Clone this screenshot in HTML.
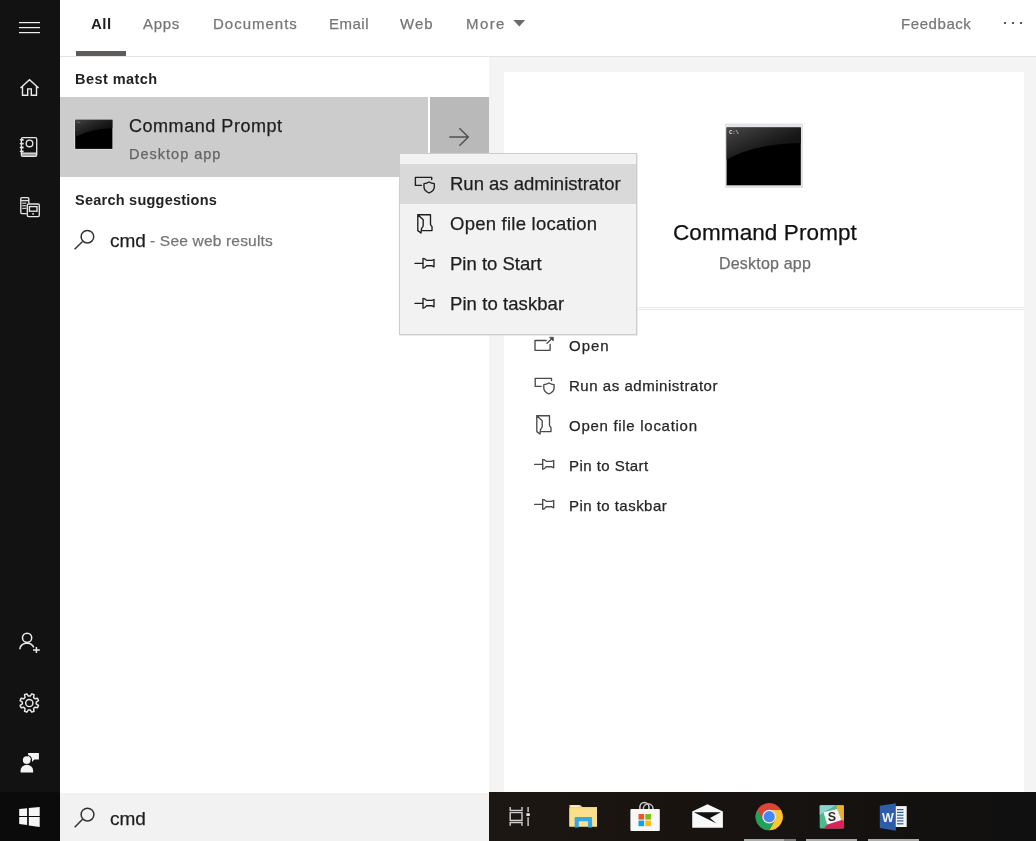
<!DOCTYPE html>
<html><head><meta charset="utf-8">
<style>
*{margin:0;padding:0;box-sizing:border-box}
html,body{width:1036px;height:841px;overflow:hidden;background:#fff;font-family:"Liberation Sans",sans-serif;position:relative}
.a{position:absolute}
.t{position:absolute;white-space:nowrap;line-height:1;will-change:transform;-webkit-text-stroke:0.25px currentColor}
#side{left:0;top:0;width:60px;height:792px;background:#121212}
#winbtn{left:0;top:792px;width:60px;height:49px;background:#0b0b0b}
#tabs{left:60px;top:0;width:976px;height:57px;background:#fff;border-bottom:1px solid #e3e3e3}
#left{left:60px;top:57px;width:429px;height:735px;background:#fff}
#right{left:489px;top:57px;width:547px;height:735px;background:#f4f4f4}
#card{left:504px;top:72px;width:520px;height:720px;background:#fff}
#search{left:60px;top:793px;width:429px;height:48px;background:#f2f2f2}
#taskbar{left:489px;top:792px;width:547px;height:49px;background:linear-gradient(90deg,#1d1713 0%,#18130f 40%,#101010 100%)}
#sel{left:60px;top:97px;width:368px;height:80px;background:#cccccc}
#arrow{left:430px;top:97px;width:59px;height:80px;background:#b9b9b9}
#menu{left:399px;top:153px;width:238px;height:182px;background:#f2f2f2;border:1px solid #cdcdcd;box-shadow:0.5px 0.5px 0 #d8d8d8}
#hl{left:400px;top:164px;width:236px;height:40px;background:#d9d9d9}
.tab{top:16px;font-size:15px;color:#767676}
.act{font-size:15px;color:#262626;letter-spacing:0.5px}
.mi{font-size:18.5px;color:#1e1e1e}
</style></head><body>
<div class="a" id="side"></div>
<div class="a" id="winbtn"></div>
<div class="a" id="tabs"></div>
<div class="a" id="left"></div>
<div class="a" id="right"></div>
<div class="a" id="card"></div>
<div class="a" id="search"></div>
<div class="a" id="taskbar"></div>
<div class="a" id="sel"></div>
<div class="a" id="arrow"></div>

<!-- tabs text -->
<div class="t tab" style="left:91px;font-weight:bold;-webkit-text-stroke:0;color:#1f1f1f;letter-spacing:0.5px">All</div>
<div class="t tab" style="left:143px;letter-spacing:0.67px">Apps</div>
<div class="t tab" style="left:213px;letter-spacing:1px">Documents</div>
<div class="t tab" style="left:329px;letter-spacing:0.5px">Email</div>
<div class="t tab" style="left:400px;letter-spacing:1px">Web</div>
<div class="t tab" style="left:466px;letter-spacing:1.4px">More</div>
<div class="t tab" style="left:901px;letter-spacing:0.57px">Feedback</div>
<div class="a" style="left:76px;top:51px;width:50px;height:5px;background:#5f5b58"></div>

<div class="t" style="left:75px;top:72px;font-size:14.5px;font-weight:bold;-webkit-text-stroke:0;color:#222;letter-spacing:0.44px">Best match</div>
<div class="t" style="left:129px;top:117px;font-size:18px;color:#1e1e1e;letter-spacing:0.54px">Command Prompt</div>
<div class="t" style="left:129px;top:147px;font-size:14.5px;color:#646464;letter-spacing:1px">Desktop app</div>
<div class="t" style="left:75px;top:193px;font-size:14.5px;font-weight:bold;-webkit-text-stroke:0;color:#222;letter-spacing:0.24px">Search suggestions</div>
<div class="t" style="left:110px;top:230.5px;font-size:19px;color:#1e1e1e;letter-spacing:0px">cmd</div>
<div class="t" style="left:150px;top:233px;font-size:15.5px;color:#767676;letter-spacing:0.19px">- See web results</div>

<div class="t" style="left:673px;top:222px;font-size:22.5px;color:#111;letter-spacing:0.1px">Command Prompt</div>
<div class="t" style="left:719px;top:256px;font-size:16px;color:#6e6e6e;letter-spacing:0.2px">Desktop app</div>
<div class="a" style="left:504px;top:307px;width:520px;height:1px;background:#ebebeb"></div><div class="a" style="left:504px;top:309px;width:520px;height:1px;background:#ebebeb"></div>

<div class="t act" style="left:569px;top:338px;letter-spacing:1px">Open</div>
<div class="t act" style="left:569px;top:378px;letter-spacing:0.53px">Run as administrator</div>
<div class="t act" style="left:569px;top:418px;letter-spacing:0.71px">Open file location</div>
<div class="t act" style="left:569px;top:458px;letter-spacing:0.45px">Pin to Start</div>
<div class="t act" style="left:569px;top:498px;letter-spacing:0.46px">Pin to taskbar</div>

<div class="t" style="left:110px;top:808.5px;font-size:19px;color:#1e1e1e;letter-spacing:0px">cmd</div>

<div class="a" id="menu"></div>
<div class="a" id="hl"></div>
<div class="t mi" style="left:450px;top:175px;letter-spacing:0px">Run as administrator</div>
<div class="t mi" style="left:450px;top:215px;letter-spacing:0.24px">Open file location</div>
<div class="t mi" style="left:450px;top:255px;letter-spacing:0px">Pin to Start</div>
<div class="t mi" style="left:450px;top:295px;letter-spacing:0.08px">Pin to taskbar</div>

<!-- ICONS overlay -->
<svg class="a" style="left:0;top:0" width="1036" height="841" viewBox="0 0 1036 841">
<!-- hamburger -->
<g fill="#f0f0f0">
<rect x="19" y="22" width="21" height="1.2"/>
<rect x="19" y="27" width="21" height="1.2"/>
<rect x="19" y="32" width="21" height="1.2"/>
</g>
<!-- home -->
<path d="M20.5 88 L29.5 79.7 L38.6 88 M22.5 86.3 V95.3 H27.7 V88.9 H31.3 V95.3 H36.5 V86.3" fill="none" stroke="#eaeaea" stroke-width="1.4" stroke-linejoin="miter"/>
<!-- notebook -->
<rect x="21.5" y="153.6" width="15" height="2.6" fill="#9a9a9a"/>
<g fill="none" stroke="#e6e6e6" stroke-width="1.35">
<rect x="21.4" y="137.6" width="15.3" height="18.8" rx="1.4"/>
<circle cx="29.5" cy="143.4" r="3.3"/>
<line x1="21.4" y1="153.2" x2="36.7" y2="153.2"/>
</g>
<g fill="#e6e6e6"><path d="M19.3 139.8 L21 138.9 H23.6 V140.7 H21 Z"/><path d="M19.3 143.7 L21 142.8 H23.6 V144.6 H21 Z"/><path d="M19.3 147.5 L21 146.6 H23.6 V148.4 H21 Z"/><path d="M19.3 151.3 L21 150.4 H23.6 V152.2 H21 Z"/></g>
<!-- devices -->
<g fill="none" stroke="#e6e6e6" stroke-width="1.35">
<path d="M26.6 213.6 H21.8 Q20.8 213.6 20.8 212.6 V198.6 Q20.8 197.6 21.8 197.6 H27.8 Q28.8 197.6 28.8 198.6 V203.5"/>
<line x1="20.8" y1="200.6" x2="28.8" y2="200.6"/>
<rect x="27.3" y="204" width="12" height="12.6" rx="1.3"/>
<rect x="29.4" y="206.6" width="7.6" height="4.6"/>
</g>
<g fill="#e6e6e6"><rect x="22.2" y="202.6" width="4.2" height="1.1"/><rect x="22.2" y="205.2" width="4.2" height="1.1"/><rect x="22.2" y="207.8" width="4.2" height="1.1"/><rect x="32.2" y="213.2" width="1.8" height="1.4"/></g>
<!-- person add -->
<g fill="none" stroke="#ececec" stroke-width="1.5">
<circle cx="27.1" cy="637.8" r="4.6"/>
<path d="M19.9 649.3 A7.2 6.6 0 0 1 33.8 647.4"/>
<path d="M36.4 646.9 V652.9 M33 649.9 H39.8"/>
</g>
<!-- gear -->
<g fill="none" stroke="#e8e8e8" stroke-width="1.45" stroke-linejoin="round">
<path d="M38.48 705.43 L37.51 707.77 L34.86 707.25 L33.55 708.56 L34.07 711.21 L31.73 712.18 L30.23 709.94 L28.37 709.94 L26.87 712.18 L24.53 711.21 L25.05 708.56 L23.74 707.25 L21.09 707.77 L20.12 705.43 L22.36 703.93 L22.36 702.07 L20.12 700.57 L21.09 698.23 L23.74 698.75 L25.05 697.44 L24.53 694.79 L26.87 693.82 L28.37 696.06 L30.23 696.06 L31.73 693.82 L34.07 694.79 L33.55 697.44 L34.86 698.75 L37.51 698.23 L38.48 700.57 L36.24 702.07 L36.24 703.93 Z"/>
<circle cx="29.3" cy="703" r="3.6"/>
</g>
<!-- feedback -->
<path d="M28.1 753 H38.9 V759.6 H34.4 L32 761.9 V759.6 H28.1 Z" fill="#f4f4f4"/>
<circle cx="26.7" cy="760.1" r="4.9" fill="none" stroke="#121212" stroke-width="1.1"/>
<g fill="#f4f4f4">
<circle cx="26.7" cy="760.1" r="3.85"/>
<path d="M20.6 772.6 V770.6 A6.25 5.8 0 0 1 33.1 770.6 V772.6 Z"/>
</g>
<!-- windows -->
<g fill="#f6f6f6">
<path d="M19.2 809.1 L27.1 808.3 V815.9 H19.2 Z"/>
<path d="M28.8 808.1 L39.7 807 V815.9 H28.8 Z"/>
<path d="M19.2 816.9 H27.1 V825.1 L19.2 824 Z"/>
<path d="M28.8 816.9 H39.7 V827 L28.8 825.4 Z"/>
</g>
<!-- search suggestions magnifier -->
<g fill="none" stroke="#333" stroke-width="1.5">
<circle cx="87.4" cy="236.7" r="6.3"/>
<line x1="74.6" y1="249.3" x2="82.6" y2="241.5"/>
</g>
<!-- search bar magnifier -->
<g fill="none" stroke="#333" stroke-width="1.5">
<circle cx="87.5" cy="814.6" r="6.4"/>
<line x1="74.7" y1="827.2" x2="82.6" y2="819.3"/>
</g>
<!-- dropdown triangle -->
<path d="M513.3 20 H525.2 L519.25 26.6 Z" fill="#6b6b6b"/>
<!-- dots -->
<g fill="#555"><rect x="1004" y="22" width="2" height="2"/><rect x="1012" y="22" width="2" height="2"/><rect x="1020" y="22" width="2" height="2"/></g>
<!-- arrow -->
<path d="M449.3 137 H468.5 M459.4 128.2 L468.3 137 L459.4 145.8" fill="none" stroke="#505050" stroke-width="1.4"/>
<!-- small cmd icon -->
<defs>
<linearGradient id="cg" x1="0" y1="0" x2="1" y2="1">
<stop offset="0" stop-color="#474747"/><stop offset="0.55" stop-color="#1a1a1a"/><stop offset="1" stop-color="#050505"/>
</linearGradient>
<linearGradient id="frame" x1="0" y1="0" x2="0" y2="1">
<stop offset="0" stop-color="#e2e4e7"/><stop offset="1" stop-color="#dfe2e6"/>
</linearGradient>
</defs>
<rect x="74.5" y="119.5" width="38" height="30" fill="#e8e8e8"/>
<rect x="75.2" y="119.8" width="37.2" height="29.1" fill="#000"/>
<path d="M75.2 119.8 H112.4 V128 Q90 129 75.2 137 Z" fill="url(#cg)" opacity="0.9"/>
<path d="M76.5 122.2 H78.6 L80.3 123.3" fill="none" stroke="#8a8a8a" stroke-width="0.6"/>
<!-- big cmd icon -->
<rect x="725" y="123.4" width="78" height="64.6" fill="url(#frame)"/>
<rect x="726.6" y="127.5" width="74.2" height="57.8" fill="#000"/>
<path d="M726.6 127.5 H800.8 V143.3 Q758 143 726.6 159.5 Z" fill="url(#cg)"/>
<text x="729" y="134.2" font-family="Liberation Mono" font-weight="bold" font-size="5.5" fill="#d8d8d8">C:\</text>
<!-- menu icons -->
<defs>
<g id="icAdmin"><path d="M421.4 185.4 H415.4 V177.3 H431.7 V179.5"/><path d="M424 183.6 Q426.7 183.6 429.1 182 Q431.6 183.6 434.3 183.6 V187 Q434.3 190.6 429.1 193 Q424 190.6 424 187 Z"/></g>
<g id="icFile"><path d="M417.8 214.7 H430.5 V224.6 L432 226.6 V230.6 H422.5 M417.8 214.7 V230.6 L421 233 L421.5 228.6 L423.2 226 V219.7 Z"/></g>
<g id="icPin"><path d="M415 263.4 H422.8"/><path d="M423 258.4 V268.3 Q424.8 268.3 426.6 265.7 H431.8 L434 266.8 V259.5 L431.8 260.4 H426.6 Q424.8 258.4 423 258.4 Z"/></g>
</defs>
<g fill="none" stroke="#1e1e1e" stroke-width="1.35" stroke-linejoin="round" stroke-linecap="round">
<use href="#icAdmin"/>
<use href="#icFile"/>
<use href="#icPin"/>
<use href="#icPin" transform="translate(0,40)"/>
</g>
<!-- right action icons -->
<g fill="none" stroke="#4a4a4a" stroke-width="1.35" stroke-linejoin="round" stroke-linecap="round">
<path d="M546.2 340.5 H535 V350.35 H550.1 V344.4"/>
<path d="M547 343.3 L551.2 339.3"/>
<use href="#icAdmin" transform="translate(119.8,201)"/>
<use href="#icFile" transform="translate(119,201)"/>
<use href="#icPin" transform="translate(119.7,201)"/>
<use href="#icPin" transform="translate(119.7,241)"/>
</g>
<path d="M549.6 337.3 H553.3 V341 Z" fill="#4a4a4a" stroke="#4a4a4a" stroke-width="0.8" stroke-linejoin="round"/>
<!-- taskbar: task view -->
<g fill="none" stroke="#cfcfcf" stroke-width="1.4">
<path d="M510.2 807 V810.4 H522 V807"/>
<rect x="510.2" y="812.5" width="11.8" height="7.9"/>
<path d="M510.2 825.8 V822.5 H522 V825.8"/>
<path d="M528.1 807 V812 M528.1 817.2 V826"/>
</g>
<rect x="526.4" y="813.3" width="3.4" height="2.6" fill="#f2f2f2"/>
<!-- explorer -->
<path d="M569.4 805 H580 L582.4 806.9 H597 V826.6 H569.4 Z" fill="#f5d467"/>
<path d="M569.4 808.2 H597 V826.6 H569.4 Z" fill="#fae08c"/>
<path d="M571 805.6 H577.8 L579.3 806.9 H571 Z" fill="#fff4cf"/>
<path d="M574.6 827.4 V818.3 Q574.6 817.1 575.8 817.1 H590.9 Q592.1 817.1 592.1 818.3 V827.4 H588 V821.3 H578.8 V827.4 Z" fill="#35a9e0"/>
<!-- store -->
<path d="M639.9 809.5 V807 A4.5 4.5 0 0 1 648.9 807 V809.5" fill="none" stroke="#d2d2d2" stroke-width="1.5"/><path d="M643.4 809.5 V808.4 A4.8 4.3 0 0 1 653 808.4 V809.5" fill="none" stroke="#bdbdbd" stroke-width="1.5"/>
<rect x="630.4" y="809" width="29.4" height="21.9" rx="1" fill="#f8f8f8"/>
<rect x="638.5" y="814" width="5.6" height="5.6" fill="#f35325"/>
<rect x="645.3" y="814" width="5.6" height="5.6" fill="#81bc06"/>
<rect x="638.5" y="820.6" width="5.6" height="5.6" fill="#05a6f0"/>
<rect x="645.3" y="820.6" width="5.6" height="5.6" fill="#ffba08"/>
<!-- mail -->
<path d="M692.2 811.4 L707.5 804.2 L722.9 811.4 V827.8 H692.2 Z" fill="#f8f8f8"/>
<path d="M693.8 812.3 H720.8 L710 818.1 L716.6 823.6 Z" fill="#111"/>
<!-- chrome -->
<g transform="translate(769.2,816.7)">
<circle r="13.6" fill="#db4437"/>
<path d="M11.78 -6.8 A13.6 13.6 0 0 1 0 13.6 L5.89 3.4 A6.8 6.8 0 0 0 0 -6.8 Z" fill="#f9c531"/>
<path d="M0 13.6 A13.6 13.6 0 0 1 -11.78 -6.8 L-5.89 3.4 A6.8 6.8 0 0 0 5.89 3.4 Z" fill="#1ea459"/>
<circle r="6.9" fill="#eef2f6"/>
<circle r="5.6" fill="#4688f1"/>
</g>
<!-- slack -->
<g>
<rect x="819.7" y="805.2" width="24.1" height="23.2" rx="1.5" fill="#4fb88c"/>
<path d="M819.7 805.2 H836 L823.5 812.3 L819.7 815 Z" fill="#8fd3cf"/>
<path d="M836 805.2 H843.8 V821 L841.4 819.9 L837.2 809 Z" fill="#ecb22e"/>
<path d="M827.2 824.6 L841.4 819.9 L843.8 821 V828.4 H824 Z" fill="#e01e5a"/>
<path d="M823.5 812.3 L837.2 809 L841.4 819.9 L827.2 824.6 Z" fill="#f6f6f6"/>
<text x="831.8" y="821.3" font-family="Liberation Sans" font-weight="bold" font-size="12.5" fill="#2a2a2a" text-anchor="middle">S</text>
</g>
<!-- word -->
<g>
<rect x="895" y="806.1" width="11.7" height="20.9" fill="#f4f4f4"/>
<g fill="#2b579a"><rect x="897" y="809" width="6.5" height="1.2"/><rect x="897" y="811.8" width="6.5" height="1.2"/><rect x="897" y="814.6" width="6.5" height="1.2"/><rect x="897" y="817.5" width="6.5" height="1.2"/><rect x="897" y="820.3" width="6.5" height="1.2"/><rect x="897" y="823.2" width="6.5" height="1.2"/></g>
<path d="M879.8 805.7 L895.8 803.3 V830.7 L879.8 827.9 Z" fill="#2e5ca8"/>
<text x="887.6" y="821.6" font-family="Liberation Sans" font-weight="bold" font-size="12.5" fill="#f0f0f0" text-anchor="middle" letter-spacing="-0.5">W</text>
</g>
<!-- taskbar underlines -->
<rect x="744" y="839" width="40" height="2" fill="#acacac"/>
<rect x="784" y="839" width="12" height="2" fill="#7c7c7c"/>
<rect x="806" y="839" width="51" height="2" fill="#acacac"/>
<rect x="868" y="839" width="51" height="2" fill="#acacac"/>
</svg>
</body></html>
